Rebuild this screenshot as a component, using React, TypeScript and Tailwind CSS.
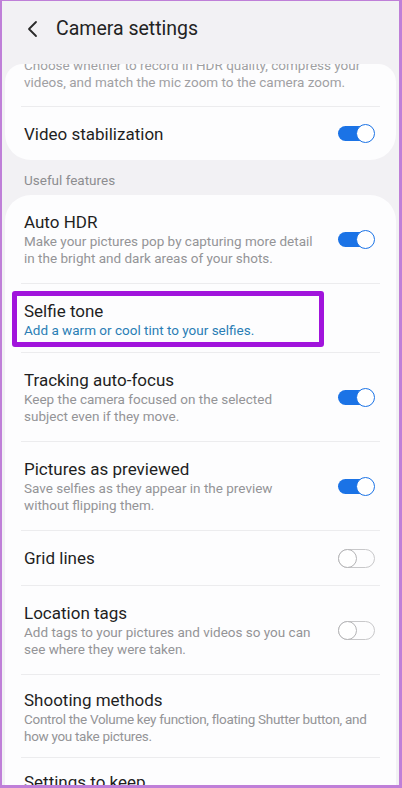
import { Fragment } from "react";

type Row = {
  title: string;
  desc?: string;
  toggle?: "on" | "off";
  highlight?: boolean;
  tight?: boolean;
  pad?: string;
};

const rows: Row[] = [
  {
    title: "Auto HDR",
    desc: "Make your pictures pop by capturing more detail\nin the bright and dark areas of your shots.",
    toggle: "on",
  },
  {
    title: "Selfie tone",
    desc: "Add a warm or cool tint to your selfies.",
    highlight: true,
    pad: "pt-[16px] pb-[13px]",
  },
  {
    title: "Tracking auto-focus",
    desc: "Keep the camera focused on the selected\nsubject even if they move.",
    toggle: "on",
  },
  {
    title: "Pictures as previewed",
    desc: "Save selfies as they appear in the preview\nwithout flipping them.",
    toggle: "on",
  },
  { title: "Grid lines", toggle: "off" },
  {
    title: "Location tags",
    desc: "Add tags to your pictures and videos so you can\nsee where they were taken.",
    toggle: "off",
  },
  {
    title: "Shooting methods",
    desc: "Control the Volume key function, floating Shutter button, and\nhow you take pictures.",
    tight: true,
    pad: "pt-[14px] pb-[12px]",
  },
  { title: "Settings to keep", pad: "pt-[13px] pb-[16px]" },
];

function Toggle({ on }: { on: boolean }) {
  return (
    <div className="relative w-[37px] h-[19px] shrink-0">
      {on ? (
        <>
          <div className="absolute left-0 top-[2px] w-[34px] h-[15px] rounded-full bg-[#1b73e6]" />
          <div className="absolute right-0 top-0 w-[19px] h-[19px] rounded-full bg-white border-[1.5px] border-[#1b73e6]" />
        </>
      ) : (
        <>
          <div className="absolute left-0 top-0 w-[37px] h-[19px] rounded-full border-[1.5px] border-[#c8c8ca]" />
          <div className="absolute left-0 top-0 w-[19px] h-[19px] rounded-full bg-white border-[1.5px] border-[#b4b4b6]" />
        </>
      )}
    </div>
  );
}

function Divider() {
  return <div className="h-px mx-[16px] bg-[#ececee]" />;
}

function SettingRow({ row }: { row: Row }) {
  return (
    <div
      className={`relative flex items-center justify-between pl-[19px] pr-[21px] ${
        row.pad ?? "pt-[16px] pb-[16px]"
      }`}
    >
      <div className={`flex-1 min-w-0 ${row.toggle ? "pr-[16px]" : ""}`}>
        <div className="text-[17px] leading-[22px] text-[#1f1f1f]">
          {row.title}
        </div>
        {row.desc && (
          <div
            className={`text-[13.5px] leading-[17px] whitespace-pre-line ${
              row.highlight ? "text-[#2a7db5]" : "text-[#949497]"
            } ${row.tight ? "tracking-[-0.3px]" : ""}`}
          >
            {row.desc}
          </div>
        )}
      </div>
      {row.toggle && <Toggle on={row.toggle === "on"} />}
      {row.highlight && (
        <div className="absolute left-[7px] top-[7px] w-[312px] h-[56px] border-[5px] border-[#a114dc] rounded-[3px]" />
      )}
    </div>
  );
}

export default function App() {
  return (
    <div
      className="h-[788px] overflow-hidden bg-[#f2f1f4] border-[#bf7fd8] border-l-2 border-t border-r-[3px] border-b-[3px]"
      style={{ fontFamily: "Roboto, 'Noto Sans', sans-serif" }}
    >
      {/* Header */}
      <div className="h-[55px] flex items-center pl-[24px]">
        <svg width="14" height="18" viewBox="0 0 14 18" className="mr-[16px]">
          <polyline
            points="10,2 3,9 10,16"
            fill="none"
            stroke="#2a2a2a"
            strokeWidth="1.8"
            strokeLinecap="round"
            strokeLinejoin="round"
          />
        </svg>
        <span className="text-[19.5px] text-[#232323]">Camera settings</span>
      </div>

      {/* Card above, scrolled */}
      <div className="mt-[8px] mx-[3px] overflow-hidden rounded-t-[18px]">
        <div className="bg-[#fdfdfe] rounded-b-[26px] -mt-[7px]">
          <div className="pl-[19px] pr-[21px] pb-[15px] text-[13.5px] leading-[17px] text-[#a0a0a3] whitespace-pre-line">
            {"Choose whether to record in HDR quality, compress your\nvideos, and match the mic zoom to the camera zoom."}
          </div>
          <Divider />
          <div className="flex items-center justify-between pl-[19px] pr-[21px] h-[53px]">
            <div className="text-[17px] leading-[22px] text-[#1f1f1f]">
              Video stabilization
            </div>
            <Toggle on />
          </div>
        </div>
      </div>

      <div className="pl-[22px] pt-[12px] pb-[6px] text-[13.5px] leading-[17px] text-[#8d8d90]">
        Useful features
      </div>

      <div className="mx-[3px] bg-[#fdfdfe] rounded-[26px]">
        {rows.map((row, i) => (
          <Fragment key={row.title}>
            {i > 0 && <Divider />}
            <SettingRow row={row} />
          </Fragment>
        ))}
      </div>
    </div>
  );
}
